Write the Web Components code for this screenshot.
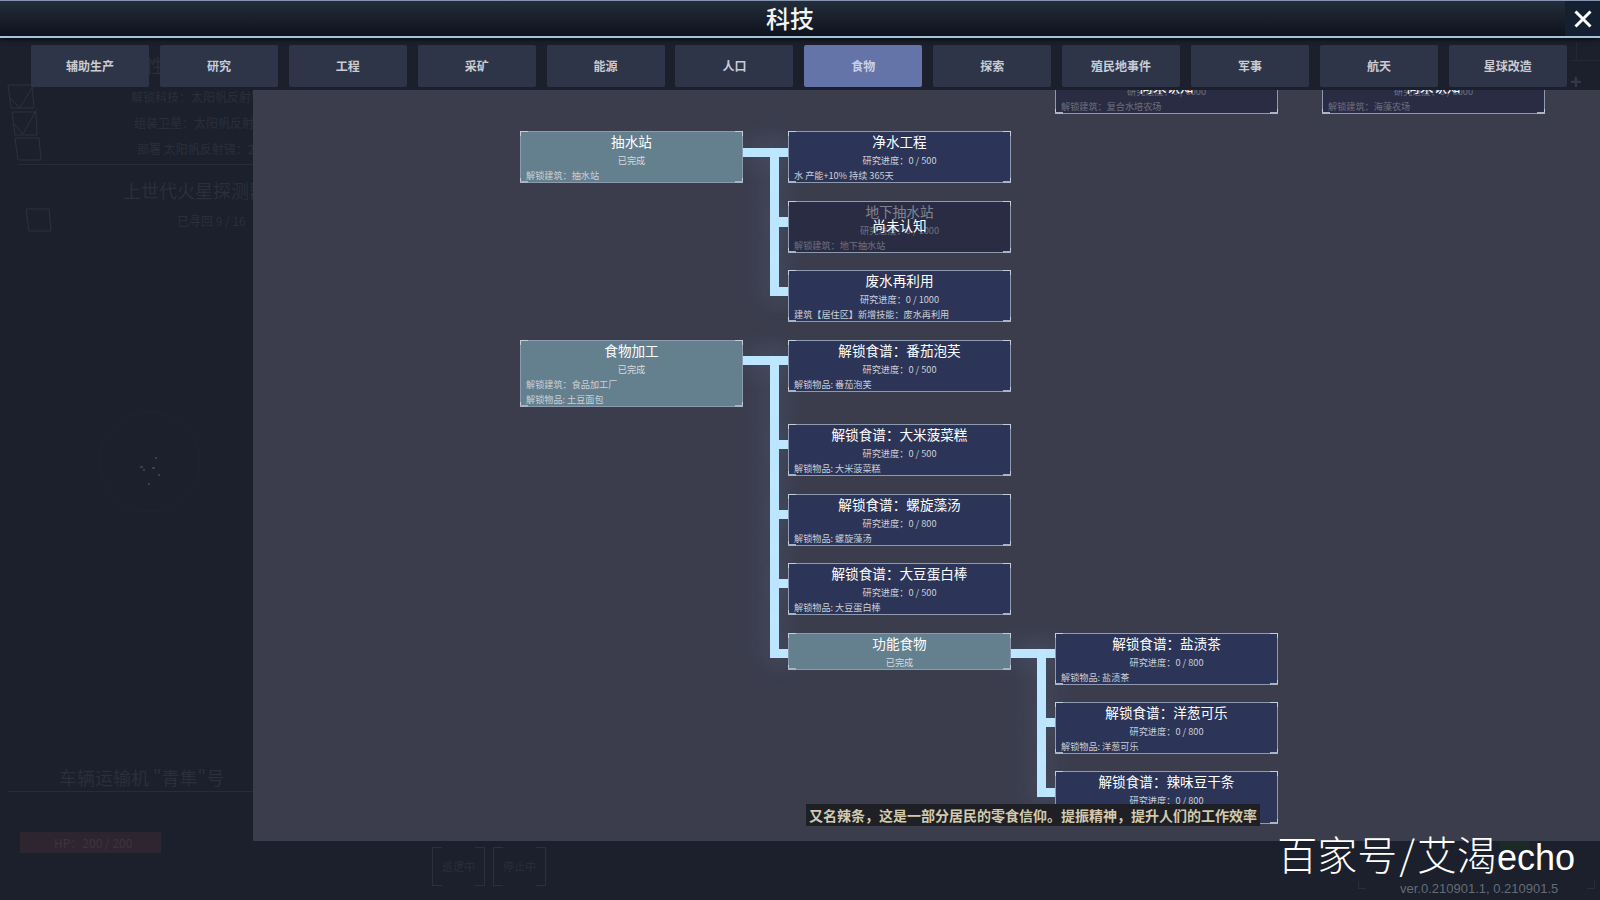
<!DOCTYPE html>
<html lang="zh">
<head>
<meta charset="utf-8">
<title>科技</title>
<style>
  html, body { margin: 0; height: 100%; background: #1b202c; overflow: hidden; }
  body { font-family: "Noto Sans CJK SC", "Liberation Sans", sans-serif; }
</style>
</head>
<body>
<game-screen>
  <dim-sidebar slot="back"></dim-sidebar>
  <title-bar slot="top" heading="科技"></title-bar>
  <tab-strip slot="top" active="食物" tabs="辅助生产,研究,工程,采矿,能源,人口,食物,探索,殖民地事件,军事,航天,星球改造"></tab-strip>
  <tech-panel slot="panel"></tech-panel>
  <version-mark slot="corner"></version-mark>
</game-screen>

<script>
class GameScreen extends HTMLElement {
  constructor() {
    super();
    this.attachShadow({ mode: 'open' });
    this.shadowRoot.innerHTML = `
      <style>
        :host { display: block; position: relative; width: 1600px; height: 900px; overflow: hidden; background: #1b202c; }
        .top { position: relative; z-index: 3; }
        .panel { position: absolute; left: 253px; top: 90px; right: 0; bottom: 59px; z-index: 1; }
      </style>
      <slot name="back"></slot>
      <div class="panel"><slot name="panel"></slot></div>
      <div class="top"><slot name="top"></slot></div>
      <slot name="corner"></slot>
    `;
  }
}

class TitleBar extends HTMLElement {
  constructor() {
    super();
    this.attachShadow({ mode: 'open' });
    this.shadowRoot.innerHTML = `
      <style>
        :host { display: flex; align-items: center; justify-content: center; position: relative; height: 35px; padding-right: 20px;
          border-top: 1px solid #8794b0; border-bottom: 2px solid #a3c6d8;
          background: linear-gradient(#232d3a, #0f121d); box-shadow: 0 2px 4px #0b0e15; }
        h1 { margin: 0; font-size: 24px; font-weight: 500; line-height: 35px; color: #f2f3f5; position: relative; top: -1px; }
        .close { position: absolute; right: 0; top: 0; width: 35px; height: 35px; display: flex; align-items: center; justify-content: center; background: #142030; }
        svg { width: 18px; height: 18px; }
      </style>
      <h1></h1>
      <div class="close"><svg viewBox="0 0 18 18"><path d="M1.5 1.5 L16.5 16.5 M16.5 1.5 L1.5 16.5" stroke="#fff" stroke-width="3" fill="none"/></svg></div>
    `;
    this.shadowRoot.querySelector('h1').textContent = this.getAttribute('heading');
  }
}

class TabStrip extends HTMLElement {
  constructor() {
    super();
    this.attachShadow({ mode: 'open' });
    this.shadowRoot.innerHTML = `
      <style>
        :host { display: flex; gap: 10.9px; height: 52px; padding: 7px 0 0 31px; box-sizing: border-box; }
        div { flex: none; width: 118px; height: 42px; padding-bottom: 2px; box-sizing: border-box; display: flex; align-items: center; justify-content: center; border-radius: 2px;
          background: #2f3548; color: #c9ccd3; font-size: 12px; font-weight: 700; }
        div.on { background: #6473a8; color: #c9d0e6; }
      </style>
    `;
    const active = this.getAttribute('active');
    this.getAttribute('tabs').split(',').forEach((name) => {
      const tab = document.createElement('div');
      tab.textContent = name;
      if (name === active) tab.className = 'on';
      this.shadowRoot.appendChild(tab);
    });
  }
}

class TechNode extends HTMLElement {
  static get observedAttributes() {
    return ['title-text', 'progress', 'lines', 'state'];
  }
  constructor() {
    super();
    this.attachShadow({ mode: 'open' });
    this.shadowRoot.innerHTML = `
      <style>
        :host { display: block; position: absolute; box-sizing: border-box; width: 223px; height: 52px; border: 1px solid #8d9ab0;
          background: #2c3557; color: #fff; text-align: center; }
        :host([state="done"]) { background: #64808f; }
        :host([state="locked"]) { background: #2a2c44; }
        .t { font-size: 13.6px; line-height: 18px; height: 22px; }
        .p { font-size: 9.2px; line-height: 13px; height: 14px; color: #cdd0d8; }
        .f { font-size: 9.15px; line-height: 15px; color: #ccd0d6; text-align: left; padding-left: 5px; white-space: nowrap; }
        :host([state="done"]) .p { color: #d5dbdf; }
        :host([state="locked"]) .wrap { opacity: .4; }
        .lock { position: absolute; left: 0; right: 0; top: 13px; font-size: 13.6px; line-height: 20px; color: #fff; }
        .corner { position: absolute; inset: -1px; pointer-events: none;
          --c: #c3cedb; --b: #a9b5c6;
          background:
            linear-gradient(var(--c),var(--c)) 0 0/8px 1px,
            linear-gradient(var(--c),var(--c)) 100% 0/8px 1px,
            linear-gradient(var(--b),var(--b)) 0 100%/8px 2px,
            linear-gradient(var(--b),var(--b)) 100% 100%/8px 2px,
            linear-gradient(var(--c),var(--c)) 0 0/1px 5px,
            linear-gradient(var(--c),var(--c)) 100% 0/1px 5px,
            linear-gradient(var(--c),var(--c)) 0 100%/1px 5px,
            linear-gradient(var(--c),var(--c)) 100% 100%/1px 5px;
          background-repeat: no-repeat; }
      </style>
      <div class="wrap"><div class="t"></div><div class="p"></div><div class="l"></div></div>
      <div class="lock" hidden>尚未认知</div>
      <div class="corner"></div>
    `;
  }
  attributeChangedCallback() {
    const root = this.shadowRoot;
    root.querySelector('.t').textContent = this.getAttribute('title-text') || '';
    root.querySelector('.p').textContent = this.getAttribute('progress') || '';
    const list = root.querySelector('.l');
    list.innerHTML = '';
    (this.getAttribute('lines') || '').split('|').filter(Boolean).forEach((text) => {
      const line = document.createElement('div');
      line.className = 'f';
      line.textContent = text;
      list.appendChild(line);
    });
    root.querySelector('.lock').hidden = this.getAttribute('state') !== 'locked';
  }
}

// one piece of a tree connector
class TechLink extends HTMLElement {
  constructor() {
    super();
    this.attachShadow({ mode: 'open' });
    this.shadowRoot.innerHTML = `
      <style>
        :host { display: block; position: absolute; background: #bde6ff; box-shadow: 0 0 26px 6px rgba(150,200,240,.09); }
      </style>
    `;
  }
}

class TechPanel extends HTMLElement {
  constructor() {
    super();
    this.attachShadow({ mode: 'open' });
    this.shadowRoot.innerHTML = `
      <style>
        :host { display: block; position: relative; width: 100%; height: 100%; overflow: hidden; background: #3b3d4d; }
        .tip { position: absolute; left: 553px; top: 714px; height: 22px; width: 454px; background: #1f2026; color: #d3caae;
          font-size: 14px; font-weight: 700; line-height: 22px; text-align: center; white-space: nowrap; z-index: 2; }
      </style>
      <div class="tip">又名辣条，这是一部分居民的零食信仰。提振精神，提升人们的工作效率</div>
    `;
    const ox = 253, oy = 90;
    const links = [
      // 抽水站
      [743, 148, 45, 9], [770, 148, 9, 148], [779, 217, 9, 10], [779, 287, 9, 9],
      // 食物加工
      [743, 356, 45, 9], [770, 356, 9, 302], [779, 440, 9, 9], [779, 510, 9, 9], [779, 579, 9, 9], [779, 649, 9, 9],
      // 功能食物
      [1010, 649, 45, 9], [1037, 649, 9, 148], [1046, 718, 9, 9], [1046, 788, 9, 9]
    ];
    links.forEach(([x, y, w, h]) => {
      const link = document.createElement('tech-link');
      link.style.cssText = `left:${x - ox}px;top:${y - oy}px;width:${w}px;height:${h}px`;
      this.shadowRoot.appendChild(link);
    });
    const c1 = 520, c2 = 788, c3 = 1055, c4 = 1322;
    const nodes = [
      [c3, 62, 52, '复合水培农场', '研究进度：0 / 8000', '解锁建筑：复合水培农场', 'locked'],
      [c4, 62, 52, '海藻农场', '研究进度：0 / 8000', '解锁建筑：海藻农场', 'locked'],
      [c1, 131, 52, '抽水站', '已完成', '解锁建筑：抽水站', 'done'],
      [c2, 131, 52, '净水工程', '研究进度：0 / 500', '水 产能+10% 持续 365天', ''],
      [c2, 201, 52, '地下抽水站', '研究进度：0 / 1000', '解锁建筑：地下抽水站', 'locked'],
      [c2, 270, 52, '废水再利用', '研究进度：0 / 1000', '建筑【居住区】新增技能：废水再利用', ''],
      [c1, 340, 67, '食物加工', '已完成', '解锁建筑：食品加工厂|解锁物品: 土豆面包', 'done'],
      [c2, 340, 52, '解锁食谱：番茄泡芙', '研究进度：0 / 500', '解锁物品: 番茄泡芙', ''],
      [c2, 424, 52, '解锁食谱：大米菠菜糕', '研究进度：0 / 500', '解锁物品: 大米菠菜糕', ''],
      [c2, 494, 52, '解锁食谱：螺旋藻汤', '研究进度：0 / 800', '解锁物品: 螺旋藻汤', ''],
      [c2, 563, 52, '解锁食谱：大豆蛋白棒', '研究进度：0 / 500', '解锁物品: 大豆蛋白棒', ''],
      [c2, 633, 37, '功能食物', '已完成', '', 'done'],
      [c3, 633, 52, '解锁食谱：盐渍茶', '研究进度：0 / 800', '解锁物品: 盐渍茶', ''],
      [c3, 702, 52, '解锁食谱：洋葱可乐', '研究进度：0 / 800', '解锁物品: 洋葱可乐', ''],
      [c3, 771, 53, '解锁食谱：辣味豆干条', '研究进度：0 / 800', '解锁物品: 辣味豆干条', '']
    ];
    nodes.forEach(([x, y, h, title, progress, lines, state]) => {
      const node = document.createElement('tech-node');
      node.style.cssText = `left:${x - ox}px;top:${y - oy}px;height:${h}px`;
      node.setAttribute('title-text', title);
      node.setAttribute('progress', progress);
      node.setAttribute('lines', lines);
      if (state) node.setAttribute('state', state);
      this.shadowRoot.appendChild(node);
    });
  }
}

class DimSidebar extends HTMLElement {
  constructor() {
    super();
    this.attachShadow({ mode: 'open' });
    this.shadowRoot.innerHTML = `
      <style>
        :host { display: block; position: absolute; left: 0; top: 0; width: 253px; height: 900px; color: #2a2f3b; overflow: hidden; }
        .row { position: absolute; white-space: nowrap; font-size: 12px; }
        hr { position: absolute; margin: 0; border: 0; height: 1px; background: #272c37; }
        svg { position: absolute; left: 0; top: 0; }
      </style>
      <svg width="253" height="900" fill="none" stroke="#2c313c" stroke-width="1">
        <path d="M8 85 H32 L34 108 H11 Z M9 97 L20 108 L33 86"/>
        <path d="M12 112 H36 L37 135 H15 Z M13 123 L23 134 L37 109"/>
        <path d="M15 138 H39 L41 160 H18 Z"/>
        <path d="M26 209 H49 L51 231 H29 Z"/>
        <circle cx="150" cy="462" r="50" stroke="#1f2430"/>
        <path d="M143 470 h2 M152 468 h3 M148 484 h2 M155 458 h2 M158 475 h2 M140 467 h3" stroke="#364254" stroke-width="2"/>
      </svg>
      <div class="row" style="left:110px;top:52px;font-size:18px">可行性</div>
      <div class="row" style="left:131px;top:88px">解锁科技：太阳帆反射镜</div>
      <div class="row" style="left:134px;top:114px">组装卫星：太阳帆反射镜</div>
      <div class="row" style="left:137px;top:140px">部署 太阳帆反射镜：2</div>
      <hr style="left:18px;top:164px;width:235px">
      <div class="row" style="left:123px;top:177px;font-size:18px">上世代火星探测器</div>
      <div class="row" style="left:177px;top:212px">已寻回 9 / 16</div>
      <div class="row" style="left:59px;top:764px;font-size:18px">车辆运输机 "青隼"号</div>
      <hr style="left:8px;top:791px;width:245px">
      <div class="row" style="left:20px;top:832px;width:141px;height:21px;background:#2d2630;line-height:21px;text-indent:34px;color:#3a3540">HP：200 / 200</div>
    `;
  }
}

class VersionMark extends HTMLElement {
  constructor() {
    super();
    this.attachShadow({ mode: 'open' });
    this.shadowRoot.innerHTML = `
      <style>
        :host { display: block; position: absolute; left: 0; right: 0; top: 0; bottom: 0; z-index: 4; pointer-events: none; }
        .mark { position: absolute; right: 25px; top: 831px; font-size: 40px; line-height: 44px; color: #fff; white-space: nowrap;
          font-family: "Noto Sans CJK SC", "Liberation Sans", sans-serif; font-weight: 300; }
        .mark span { font-family: "Liberation Sans", sans-serif; font-size: 36px; }
        .mark i { font-style: normal; padding: 0 2px; }
        .ver { position: absolute; left: 1400px; top: 881px; font: 13px/16px "Liberation Sans", sans-serif; color: #666b78; white-space: nowrap; }
        .btn { position: absolute; top: 847px; width: 53px; height: 39px; color: #2a2f3b; font-size: 11px; line-height: 39px; text-align: center;
          --c: #2a303c;
          background:
            linear-gradient(var(--c),var(--c)) 0 0/10px 1px,
            linear-gradient(var(--c),var(--c)) 100% 0/10px 1px,
            linear-gradient(var(--c),var(--c)) 0 100%/10px 1px,
            linear-gradient(var(--c),var(--c)) 100% 100%/10px 1px,
            linear-gradient(var(--c),var(--c)) 0 0/1px 100%,
            linear-gradient(var(--c),var(--c)) 100% 0/1px 100%;
          background-repeat: no-repeat; }
        .frame { position: absolute; left: 1358px; top: 843px; width: 237px; height: 46px;
          --c: #282e3a;
          background:
            linear-gradient(var(--c),var(--c)) 0 100%/8px 1px,
            linear-gradient(var(--c),var(--c)) 100% 100%/8px 1px,
            linear-gradient(var(--c),var(--c)) 0 100%/1px 8px,
            linear-gradient(var(--c),var(--c)) 100% 100%/1px 8px;
          background-repeat: no-repeat; }
        .hp { position: absolute; left: 1500px; top: 841px; width: 30px; height: 9px; background: #1c2a26; }
        .plus { position: absolute; left: 1570px; top: 72px; font: 700 20px/20px "Liberation Sans", sans-serif; color: #343947; }
        .tick { position: absolute; background: #232835; }
      </style>
      <div class="btn" style="left:432px">巡逻中</div>
      <div class="btn" style="left:493px">停止中</div>
      <div class="frame"></div>
      <div class="hp"></div>
      <div class="tick" style="left:1570px;top:60px;width:30px;height:1px"></div>
      <div class="tick" style="left:1576px;top:42px;width:1px;height:18px"></div>
      <div class="plus">+</div>
      <div class="mark">百家号<i>/</i>艾渴<span>echo</span></div>
      <div class="ver">ver.0.210901.1, 0.210901.5</div>
    `;
  }
}

customElements.define('game-screen', GameScreen);
customElements.define('title-bar', TitleBar);
customElements.define('tab-strip', TabStrip);
customElements.define('tech-node', TechNode);
customElements.define('tech-link', TechLink);
customElements.define('tech-panel', TechPanel);
customElements.define('dim-sidebar', DimSidebar);
customElements.define('version-mark', VersionMark);
</script>
</body>
</html>
